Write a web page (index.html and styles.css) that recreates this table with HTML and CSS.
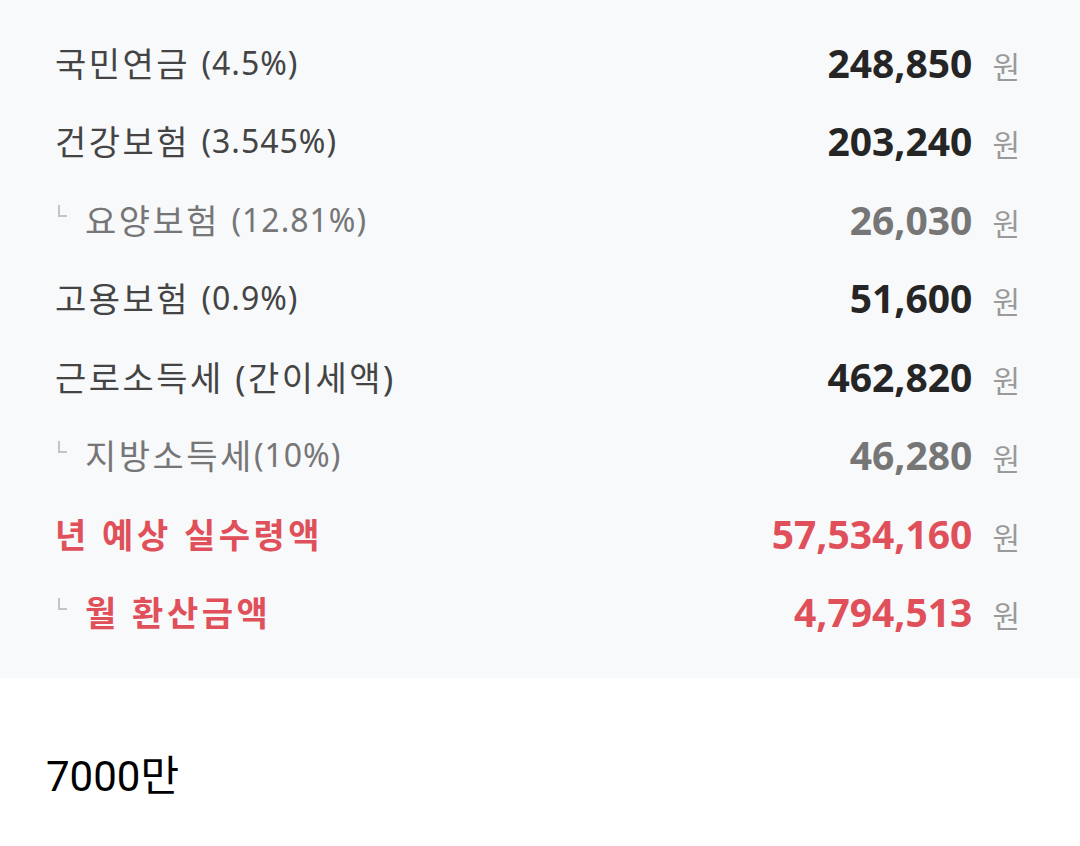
FILE: index.html
```html
<!DOCTYPE html>
<html lang="ko">
<head>
    <meta charset="UTF-8">
    <meta name="viewport" content="width=device-width, initial-scale=1.0">
    <title>실수령액</title>
    <link rel="stylesheet" href="styles.css">
</head>
<body>
    <div class="panel">
        <div class="row">
            <span class="label">국민연금 <small>(4.5%)</small></span>
            <span class="amount"><b>248,850</b><i>원</i></span>
        </div>
        <div class="row">
            <span class="label">건강보험 <small>(3.545%)</small></span>
            <span class="amount"><b>203,240</b><i>원</i></span>
        </div>
        <div class="row sub">
            <span class="label"><em class="corner"></em>요양보험 <small>(12.81%)</small></span>
            <span class="amount"><b>26,030</b><i>원</i></span>
        </div>
        <div class="row">
            <span class="label">고용보험 <small>(0.9%)</small></span>
            <span class="amount"><b>51,600</b><i>원</i></span>
        </div>
        <div class="row">
            <span class="label">근로소득세 (간이세액)</span>
            <span class="amount"><b>462,820</b><i>원</i></span>
        </div>
        <div class="row sub">
            <span class="label"><em class="corner"></em>지방소득세<small>(10%)</small></span>
            <span class="amount"><b>46,280</b><i>원</i></span>
        </div>
        <div class="row total">
            <span class="label">년 예상 실수령액</span>
            <span class="amount"><b>57,534,160</b><i>원</i></span>
        </div>
        <div class="row total">
            <span class="label"><em class="corner"></em>월 환산금액</span>
            <span class="amount"><b>4,794,513</b><i>원</i></span>
        </div>
    </div>

    <p class="caption">7000만</p>
</body>
</html>
```

FILE: styles.css
```css
* {
    margin: 0;
    padding: 0;
    box-sizing: border-box;
}

body {
    background: #fff;
    font-family: 'Noto Sans', 'Noto Sans CJK KR', sans-serif;
}

.panel {
    background: #f8f9fb;
    padding: 23px 60px 27px 55px;
}

.row {
    display: flex;
    justify-content: space-between;
    align-items: center;
    height: 78.5px;
}

.label {
    display: flex;
    align-items: center;
    white-space: pre;
    font-size: 34px;
    letter-spacing: 2.5px;
    color: #444;
}

.label small {
    font-size: 32px;
    letter-spacing: 1px;
}

.amount b {
    font-size: 39px;
    font-weight: 700;
    color: #252525;
}

.amount i {
    font-style: normal;
    font-size: 30px;
    color: #9a9a9a;
    margin-left: 20px;
}

.row.sub .label,
.row.sub .amount b {
    color: #767676;
}

.row.total .label {
    color: #e0505a;
    font-weight: 700;
    letter-spacing: 3.5px;
}

.row.total .amount b {
    color: #e0505a;
}

.corner {
    width: 9px;
    height: 12px;
    border-left: 2px solid #c4c4c4;
    border-bottom: 2px solid #c4c4c4;
    margin: -16px 18px 0 3px;
}

.caption {
    font-family: 'Roboto', 'Noto Sans CJK KR', sans-serif;
    font-size: 42px;
    color: #000;
    padding: 64px 0 0 46px;
}
```
